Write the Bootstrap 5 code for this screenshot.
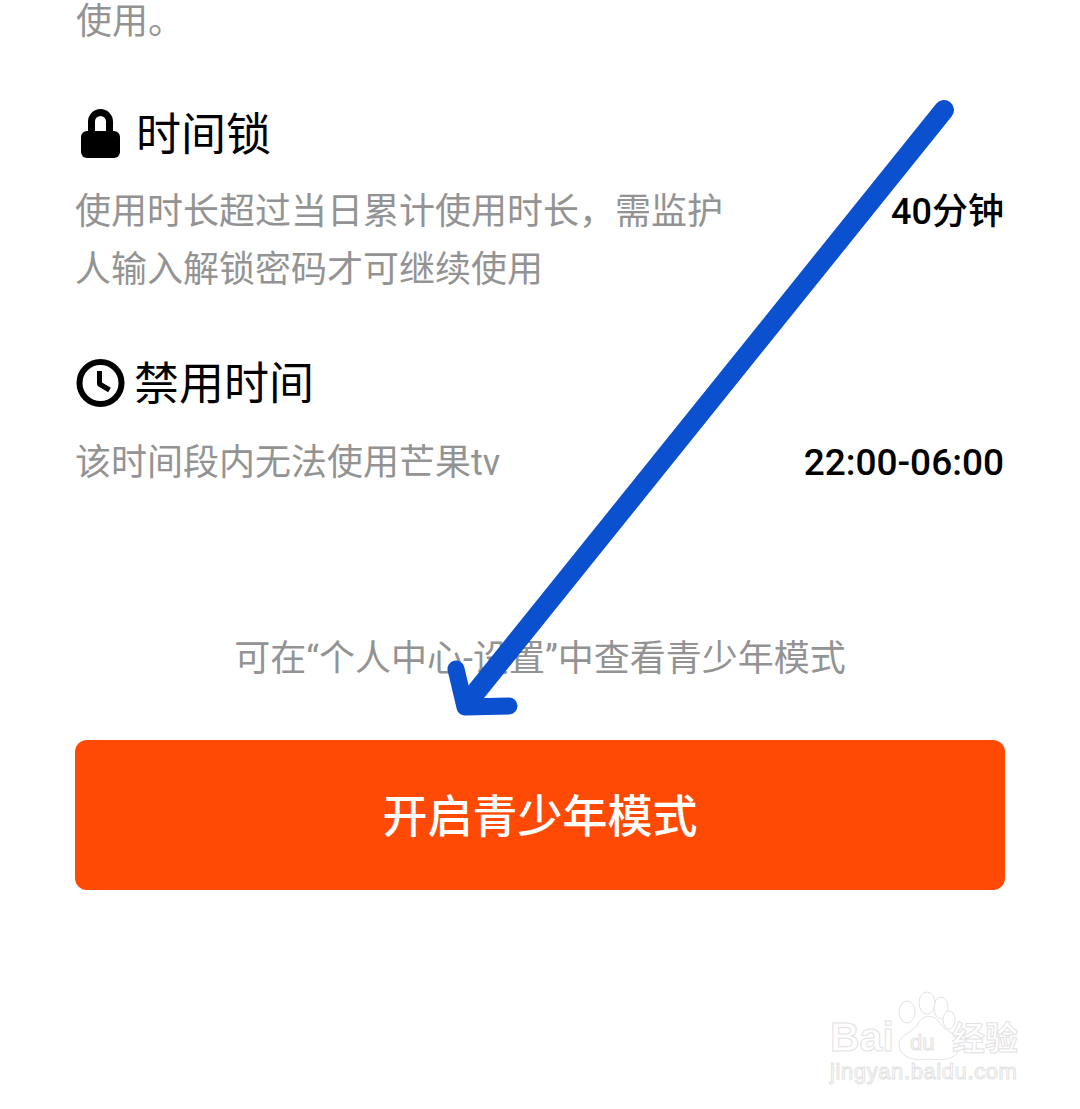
<!DOCTYPE html>
<html lang="zh-CN">
<head>
<meta charset="UTF-8">
<meta name="viewport" content="width=device-width, initial-scale=1.0">
<title>青少年模式</title>
<link rel="stylesheet" href="https://cdn.jsdelivr.net/npm/bootstrap@5.3.3/dist/css/bootstrap.min.css">
<style>
    body {
        font-family: Roboto, "Noto Sans CJK SC", sans-serif;
        background: #fff;
        height: 1109px;
        overflow: hidden;
    }
    .screen { position: relative; height: 1109px; padding: 0 76px 0 76px; }
    .intro-end { color: #939393; font-size: 36px; line-height: 48px; margin-top: -2px; height: 110px; }
    .rule-title { color: #000; font-size: 45px; line-height: 56px; height: 56px; }
    .rule-desc { color: #939393; font-size: 36px; line-height: 58px; margin-left: -1px; }
    .rule-val { color: #000; font-size: 37px; line-height: 58px; font-weight: 500; white-space: nowrap; }
    .lock-rule { height: 192px; }
    .lock-rule .rule-title { gap: 10px; }
    .lock-rule .rule-body { margin-top: 19px; }
    .lock-rule .rule-desc { width: 660px; }
    .lock-rule .rule-val { font-size: 36px; }
    .time-rule { margin-top: 57px; }
    .time-rule .rule-title { gap: 8px; }
    .time-rule .rule-body { margin-top: 21px; }
    .hint { color: #939393; font-size: 36px; line-height: 48px; margin-top: 143px; margin-left: -76px; margin-right: -76px; }
    .open-btn {
        background: #ff4a05; border: 0; color: #fff; font-size: 45px; line-height: 60px; font-weight: 500;
        height: 150px; border-radius: 12px; margin-top: 57px; width: 930px; margin-left: -1px; padding-top: 12px;
    }
    .open-btn:hover { background: #ff4a05; color: #fff; }
    .overlay { position: absolute; left: 0; top: 0; pointer-events: none; }
    .mark-text { font-family: "Liberation Sans", sans-serif; }
</style>
</head>
<body>
<div class="screen">
    <div class="intro-end">使用。</div>

    <div class="lock-rule">
        <div class="rule-title d-flex align-items-center">
            <svg width="50" height="56" viewBox="0 -2 50 56" fill="#000">
                <path d="M15.5 24V11.5a9 9 0 0 1 18 0V24" fill="none" stroke="#000" stroke-width="7"/>
                <rect x="5" y="21" width="39" height="27" rx="6"/>
            </svg>
            <span>时间锁</span>
        </div>
        <div class="rule-body d-flex justify-content-between">
            <div class="rule-desc">使用时长超过当日累计使用时长，需监护人输入解锁密码才可继续使用</div>
            <div class="rule-val">40分钟</div>
        </div>
    </div>

    <div class="time-rule">
        <div class="rule-title d-flex align-items-center">
            <svg width="50" height="56" viewBox="0 0 50 56" fill="none" stroke="#000">
                <circle cx="24.5" cy="26" r="21" stroke-width="6"/>
                <path d="M23.5 14V27l10 6" stroke-width="5" stroke-linejoin="round"/>
            </svg>
            <span>禁用时间</span>
        </div>
        <div class="rule-body d-flex justify-content-between">
            <div class="rule-desc">该时间段内无法使用芒果tv</div>
            <div class="rule-val">22:00-06:00</div>
        </div>
    </div>

    <div class="hint text-center">可在“个人中心-设置”中查看青少年模式</div>
    <button type="button" class="btn open-btn d-block">开启青少年模式</button>

    <!-- arrow drawn over the screenshot -->
    <svg class="overlay" width="1080" height="1109" viewBox="0 0 1080 1109" fill="none">
        <path d="M944 112 468 704" stroke="#0a50cf" stroke-width="20" stroke-linecap="round"/>
        <path d="M456 671 465 709 509 708" stroke="#0a50cf" stroke-width="17" stroke-linecap="round" stroke-linejoin="round"/>
    </svg>

    <!-- baidu watermark -->
    <svg class="overlay" width="1080" height="1109" viewBox="0 0 1080 1109" fill="#fff" stroke="#e2e2e2" stroke-width="1">
        <ellipse cx="907" cy="1014" rx="8" ry="11"/>
        <ellipse cx="927" cy="1005" rx="8" ry="11"/>
        <ellipse cx="941" cy="1010" rx="7" ry="11"/>
        <ellipse cx="949" cy="1022" rx="6" ry="9"/>
        <path d="M899 1046c0-10 14-10 20-22 5-8 15-7 20 0 6 10 20 12 20 24 0 13-15 15-30 13-13 2-30 0-30-15z"/>
        <text class="mark-text" x="830" y="1053" font-size="41" font-weight="700">Bai</text>
        <text class="mark-text" x="910" y="1052" font-size="22">du</text>
        <text x="952" y="1052" font-size="33" font-family="Noto Sans CJK SC" font-weight="700">经验</text>
        <text class="mark-text" x="830" y="1081" font-size="22" letter-spacing=".6">jingyan.baidu.com</text>
    </svg>
</div>
<script src="https://cdn.jsdelivr.net/npm/bootstrap@5.3.3/dist/js/bootstrap.bundle.min.js"></script>
</body>
</html>
